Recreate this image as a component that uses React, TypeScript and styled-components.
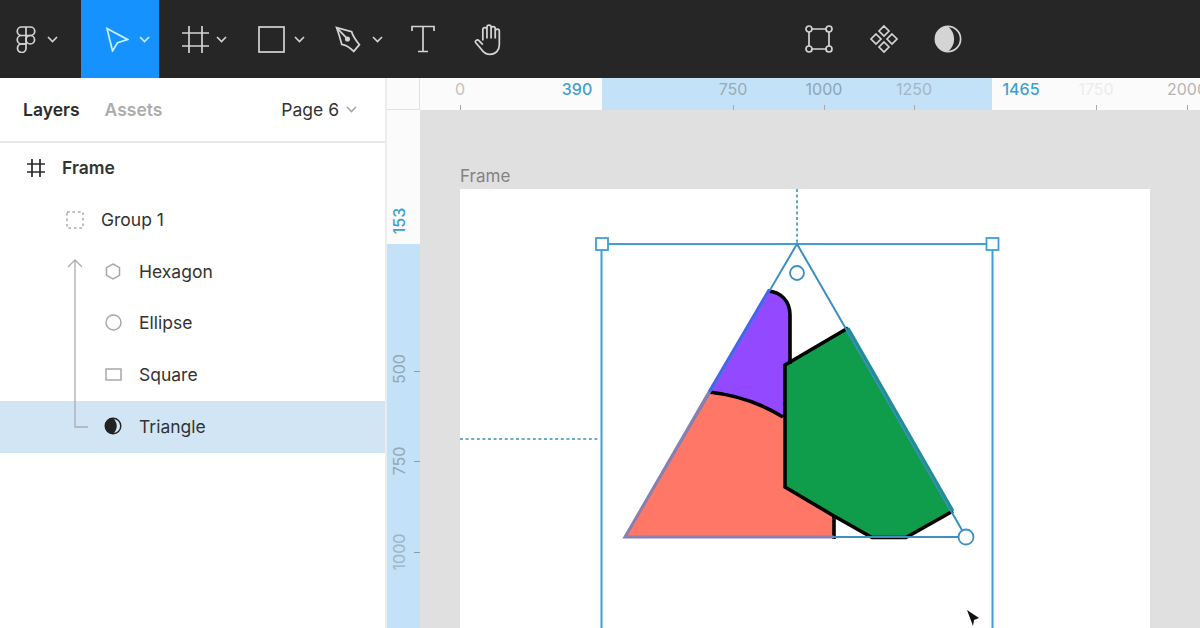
import React from 'react';
import styled, { createGlobalStyle } from 'styled-components';

const GlobalStyle = createGlobalStyle`
  html, body {
    margin: 0;
    padding: 0;
    height: 100%;
    overflow: hidden;
    background: #fff;
  }
  #root {
    height: 100%;
  }
  * {
    box-sizing: border-box;
  }
`;

const Page = styled.div`
  width: 1200px;
  height: 628px;
  display: flex;
  flex-direction: column;
  overflow: hidden;
  font-family: Inter, 'Liberation Sans', sans-serif;
`;

const Toolbar = styled.header`
  flex: 0 0 78px;
  display: flex;
  background: #262626;
  color: #d4d4d4;
`;

const ToolGroup = styled.div`
  flex: 0 0 787px;
  display: flex;
`;

const Tool = styled.div<{ $width: number; $pad?: number; $gap?: number; $active?: boolean }>`
  flex: 0 0 ${(p) => p.$width}px;
  display: flex;
  align-items: center;
  justify-content: ${(p) => (p.$pad === undefined ? 'center' : 'flex-start')};
  padding-left: ${(p) => p.$pad ?? 0}px;
  gap: ${(p) => p.$gap ?? 10}px;
  background: ${(p) => (p.$active ? '#1592fe' : 'transparent')};
  color: ${(p) => (p.$active ? '#c8f1fd' : '#d4d4d4')};
`;

const Body = styled.div`
  flex: 1;
  min-height: 0;
  display: flex;
`;

const Panel = styled.aside`
  flex: 0 0 387px;
  border-right: 2px solid #ececec;
  display: flex;
  flex-direction: column;
  background: #fff;
`;

const PanelHeader = styled.div`
  flex: 0 0 65px;
  display: flex;
  align-items: center;
  padding: 0 28px 0 23px;
  border-bottom: 2px solid #e8e8e8;
  font-size: 17.5px;
`;

const Tab = styled.span<{ $active?: boolean }>`
  font-weight: 600;
  margin-right: 25px;
  color: ${(p) => (p.$active ? '#2b2b2b' : '#acacac')};
`;

const PagePicker = styled.div`
  margin-left: auto;
  display: flex;
  align-items: center;
  gap: 7px;
  color: #333;
`;

const LayerList = styled.div`
  position: relative;
  display: flex;
  flex-direction: column;
`;

const LayerRow = styled.div<{ $indent: number; $selected?: boolean; $bold?: boolean }>`
  height: 51.7px;
  display: flex;
  align-items: center;
  gap: 16px;
  padding-left: ${(p) => p.$indent}px;
  padding-bottom: 2px;
  background: ${(p) => (p.$selected ? '#d2e5f5' : 'transparent')};
  color: #333;
  font-size: 17.5px;
  font-weight: ${(p) => (p.$bold ? 600 : 400)};
`;

const LayerIcon = styled.span`
  flex: 0 0 20px;
  height: 20px;
  display: flex;
  align-items: center;
  justify-content: center;
`;

const Connector = styled.svg`
  position: absolute;
  left: 66px;
  top: 115px;
`;

const Workspace = styled.main`
  flex: 1;
  min-width: 0;
  display: grid;
  grid-template-columns: 33px 1fr;
  grid-template-rows: 32px 1fr;
`;

const RulerCorner = styled.div`
  background: #fbfbfb;
  border-right: 1px solid #e2e2e2;
  border-bottom: 1px solid #e2e2e2;
`;

const TopRuler = styled.div`
  position: relative;
  background: #fbfbfb;
  overflow: hidden;
`;

const SideRuler = styled.div`
  position: relative;
  background: #fbfbfb;
  overflow: hidden;
`;

const RulerBand = styled.div<{ $horizontal?: boolean }>`
  position: absolute;
  background: #c3e2f8;
  ${(p) =>
    p.$horizontal
      ? 'left: 182px; width: 390px; top: 0; bottom: 0;'
      : 'top: 134px; bottom: 0; left: 0; right: 0;'}
`;

const TopLabel = styled.span<{ $at: number; $tone: string; $strong?: boolean }>`
  position: absolute;
  top: 2px;
  left: ${(p) => p.$at}px;
  transform: translateX(-50%);
  font-size: 16px;
  line-height: 18px;
  color: ${(p) => p.$tone};
  font-weight: ${(p) => (p.$strong ? 500 : 400)};
`;

const TopTick = styled.i<{ $at: number; $tone: string }>`
  position: absolute;
  bottom: 0;
  left: ${(p) => p.$at}px;
  width: 1px;
  height: 5px;
  background: ${(p) => p.$tone};
`;

const SideLabel = styled.span<{ $at: number; $tone: string; $strong?: boolean }>`
  position: absolute;
  left: 12px;
  top: ${(p) => p.$at}px;
  transform: translate(-50%, -50%) rotate(-90deg);
  font-size: 16px;
  line-height: 18px;
  color: ${(p) => p.$tone};
  font-weight: ${(p) => (p.$strong ? 500 : 400)};
`;

const SideTick = styled.i<{ $at: number }>`
  position: absolute;
  right: 0;
  top: ${(p) => p.$at}px;
  width: 6px;
  height: 1px;
  background: #8b9aa5;
`;

const Canvas = styled.div`
  position: relative;
  min-height: 0;
  overflow: hidden;
  background: #e0e0e0;
  padding: 56px 50px 0 40px;
  display: flex;
  flex-direction: column;
`;

const FrameName = styled.div`
  flex: 0 0 23px;
  font-size: 17px;
  line-height: 20px;
  color: #838383;
`;

const Sheet = styled.div`
  flex: 1;
  position: relative;
  background: #fff;
`;

const Drawing = styled.svg`
  position: absolute;
  inset: 0;
  width: 100%;
  height: 100%;
  overflow: hidden;
`;

const Chevron = ({ color = 'currentColor' }: { color?: string }) => (
  <svg width="11" height="7" viewBox="0 0 11 7" fill="none" stroke={color} strokeWidth="1.6">
    <path d="M1 1l4.5 4.5L10 1" />
  </svg>
);

const Icon = ({ w, h, children }: { w: number; h: number; children: React.ReactNode }) => (
  <svg width={w} height={h} viewBox={`0 0 ${w} ${h}`} fill="none" stroke="currentColor" strokeWidth="1.7">
    {children}
  </svg>
);

const topRuler = [
  { at: 40, label: '0', tone: '#c2c2c2' },
  { at: 157, label: '390', tone: '#3f9fd2', strong: true, noTick: true },
  { at: 313, label: '750', tone: '#98aab6' },
  { at: 404, label: '1000', tone: '#8fa5b4' },
  { at: 494, label: '1250', tone: '#a3b6c2' },
  { at: 601, label: '1465', tone: '#3f9fd2', strong: true, noTick: true },
  { at: 676, label: '1750', tone: '#ececec' },
  { at: 767, label: '2000', tone: '#b5b5b5' },
];

const sideRuler = [
  { at: 111, label: '153', tone: '#3f9fd2', strong: true },
  { at: 259, label: '500', tone: '#93a7b4', tick: 261 },
  { at: 351, label: '750', tone: '#93a7b4', tick: 351 },
  { at: 442, label: '1000', tone: '#a0b3bf', tick: 442 },
];

const layers = [
  { name: 'Hexagon', icon: <svg width="16" height="17" viewBox="0 0 16 17" fill="none" stroke="#a8a8a8" strokeWidth="1.5"><path d="M8 1l6.5 3.7v7.6L8 16l-6.5-3.7V4.700z" /></svg> },
  { name: 'Ellipse', icon: <svg width="17" height="17" viewBox="0 0 17 17" fill="none" stroke="#a8a8a8" strokeWidth="1.5"><circle cx="8.5" cy="8.5" r="7.5" /></svg> },
  { name: 'Square', icon: <svg width="17" height="13" viewBox="0 0 17 13" fill="none" stroke="#a8a8a8" strokeWidth="1.5"><rect x="1" y="1" width="15" height="11" /></svg> },
  {
    name: 'Triangle',
    selected: true,
    icon: (
      <svg width="18" height="18" viewBox="0 0 18 18" fill="none" stroke="#222" strokeWidth="1.4">
        <circle cx="9" cy="9" r="7.8" />
        <path d="M9 1.2A7.8 7.8 0 0 0 9 16.8 10 10 0 0 0 9 1.2z" fill="#222" stroke="none" />
      </svg>
    ),
  },
];

export default function App() {
  return (
    <Page>
      <GlobalStyle />
      <Toolbar>
        <ToolGroup>
          <Tool $width={81} $pad={16} $gap={11}>
            <Icon w={20} h={27}>
              <path d="M10 1H5.5a4.25 4.25 0 0 0 0 8.5H10zM10 1h4.5a4.25 4.25 0 0 1 0 8.5H10zM10 9.5H5.5a4.25 4.25 0 0 0 0 8.500H10z" />
              <circle cx="14.3" cy="13.75" r="4.25" />
              <path d="M10 18H5.5A4.25 4.25 0 1 0 10 22.25z" />
            </Icon>
            <Chevron />
          </Tool>
          <Tool $width={78} $active $pad={24} $gap={10}>
            <Icon w={24} h={25}>
              <path d="M2 1.5l20.5 11-10 3.2-5 8.3z" />
            </Icon>
            <Chevron />
          </Tool>
          <Tool $width={77} $pad={23} $gap={7}>
            <Icon w={27} h={27}>
              <path d="M7 0v27M20 0v27M0 7h27M0 20h27" />
            </Icon>
            <Chevron />
          </Tool>
          <Tool $width={77} $pad={22} $gap={9}>
            <Icon w={27} h={27}>
              <rect x="1" y="1" width="25" height="25" />
            </Icon>
            <Chevron />
          </Tool>
          <Tool $width={79} $pad={22} $gap={11}>
            <svg width="26" height="27" viewBox="0 0 25 26" fill="none" stroke="currentColor" strokeWidth="1.7">
              <path d="M1.5 1.5L16 5.5c1 3.500 3 7 7.500 12.500L18 24.500c-4-4-8-6.300-11.500-6.800C5 12 3.500 7 1.500 1.500z" />
              <path d="M1.500 1.500l9.500 10" />
              <circle cx="12" cy="12.500" r="1.600" fill="currentColor" />
            </svg>
            <Chevron />
          </Tool>
          <Tool $width={62}>
            <Icon w={24} h={28}>
              <path d="M1 6V1.500h22V6M12 1.500v25M7 26.500h10" />
            </Icon>
          </Tool>
          <Tool $width={68}>
            <svg width="31" height="33" viewBox="0 0 30 32" fill="none" stroke="currentColor" strokeWidth="1.7">
              <path d="M9.500 17V6.500a2 2 0 0 1 4 0M13.500 15V4a2 2 0 0 1 4 0v11M17.500 15V5.500a2 2 0 0 1 4 0V15M21.500 15V8a2 2 0 0 1 4 0v13c0 5.500-3.500 9.500-9 9.500-4.500 0-6.500-2-8.500-5l-5.500-6.500c-1-1.500 1.500-3.500 3-2.200L9.500 21" />
            </svg>
          </Tool>
        </ToolGroup>
        <Tool $width={64}>
          <Icon w={28} h={28}>
            <path d="M7 4h14M7 24h14M4 7v14M24 7v14" />
            <circle cx="4" cy="4" r="3" />
            <circle cx="24" cy="4" r="3" />
            <circle cx="4" cy="24" r="3" />
            <circle cx="24" cy="24" r="3" />
          </Icon>
        </Tool>
        <Tool $width={65}>
          <Icon w={30} h={30}>
            <path d="M15 2l5 5-5 5-5-5zM15 18l5 5-5 5-5-5zM7 10l5 5-5 5-5-5zM23 10l5 5-5 5-5-5z" />
          </Icon>
        </Tool>
        <Tool $width={64}>
          <Icon w={28} h={28}>
            <circle cx="14" cy="14" r="12.6" />
            <path d="M14 1.400A12.600 12.600 0 0 0 14 26.600 16 16 0 0 0 14 1.400z" fill="#d4d4d4" stroke="none" />
          </Icon>
        </Tool>
      </Toolbar>

      <Body>
        <Panel>
          <PanelHeader>
            <Tab $active>Layers</Tab>
            <Tab>Assets</Tab>
            <PagePicker>
              Page 6
              <Chevron color="#a5a5a5" />
            </PagePicker>
          </PanelHeader>
          <LayerList>
            <LayerRow $indent={26} $bold>
              <LayerIcon>
                <Icon w={20} h={20}>
                  <path d="M6 1v18M14 1v18M1 6h18M1 14h18" stroke="#2b2b2b" />
                </Icon>
              </LayerIcon>
              Frame
            </LayerRow>
            <LayerRow $indent={65}>
              <LayerIcon>
                <svg width="18" height="18" viewBox="0 0 18 18" fill="none" stroke="#a8a8a8" strokeWidth="1.5" strokeDasharray="2.6 2.9">
                  <rect x="1" y="1" width="16" height="16" />
                </svg>
              </LayerIcon>
              Group 1
            </LayerRow>
            {layers.map((layer) => (
              <LayerRow key={layer.name} $indent={103} $selected={layer.selected}>
                <LayerIcon>{layer.icon}</LayerIcon>
                {layer.name}
              </LayerRow>
            ))}
            <Connector width="24" height="172" viewBox="0 0 24 172" fill="none" stroke="#a9adb0" strokeWidth="1.3">
              <path d="M2 9l7-7 7 7M9 2v167h13" />
            </Connector>
          </LayerList>
        </Panel>

        <Workspace>
          <RulerCorner />
          <TopRuler>
            <RulerBand $horizontal />
            {topRuler.map((t) => (
              <React.Fragment key={t.label}>
                <TopLabel $at={t.at} $tone={t.tone} $strong={t.strong}>
                  {t.label}
                </TopLabel>
                {!t.noTick && <TopTick $at={t.at} $tone="#a9a9a9" />}
              </React.Fragment>
            ))}
          </TopRuler>
          <SideRuler>
            <RulerBand />
            {sideRuler.map((t) => (
              <React.Fragment key={t.label}>
                <SideLabel $at={t.at} $tone={t.tone} $strong={t.strong}>
                  {t.label}
                </SideLabel>
                {t.tick && <SideTick $at={t.tick} />}
              </React.Fragment>
            ))}
          </SideRuler>
          <Canvas>
            <FrameName>Frame</FrameName>
            <Sheet>
              <Drawing viewBox="460 189 690 439">
                <path d="M709 392C737 395 762 404 783 417V487L834 516V538H625z" fill="#ff7767" />
                <path d="M769 290C781 292 790 301 790 315V365L784 365V417C762 404 737 395 709 392z" fill="#9249ff" />
                <path d="M847 328L785 365V487L833 515L870 537H906L953 512z" fill="#0f9d4b" />
                <g fill="none" stroke="#000" strokeWidth="3.6">
                  <path d="M768 291C781 292 790 301 790 315V364" />
                  <path d="M709 392C737 395 762 404 783 417" />
                  <path d="M848 328L785 365V487L834 516L872 537.500H906L953 511" />
                  <path d="M834 516V539" />
                </g>
                <g fill="none" stroke="#3f9fd2">
                  <path d="M797 189V243" strokeDasharray="3 2.6" strokeWidth="1.6" stroke="#3c8fb8" />
                  <path d="M460 439H600" strokeDasharray="3 2.6" strokeWidth="1.6" stroke="#3c8fb8" />
                  <path d="M601.500 628V244H992.500V628" strokeWidth="2" />
                  <path d="M797 244L625 537H966z" strokeWidth="2" stroke="#3d8fc0" />
                  <path d="M709 392L625 537H834" strokeWidth="3" stroke="#8a7fb0" />
                  <path d="M769 290L709 392" strokeWidth="3" stroke="#4a62f0" />
                  <path d="M848 328L953 511" strokeWidth="3" stroke="#1f8f94" />
                  <rect x="596" y="238" width="12" height="12" fill="#fff" strokeWidth="1.8" />
                  <rect x="986.500" y="238" width="12" height="12" fill="#fff" strokeWidth="1.8" />
                  <circle cx="797" cy="273" r="7" fill="#fff" strokeWidth="1.8" stroke="#3d8fc0" />
                  <circle cx="966" cy="537" r="7.500" fill="#fff" strokeWidth="1.8" stroke="#3d8fc0" />
                </g>
                <path d="M967 610L979 618 974 620 973 626z" fill="#111" />
              </Drawing>
            </Sheet>
          </Canvas>
        </Workspace>
      </Body>
    </Page>
  );
}
